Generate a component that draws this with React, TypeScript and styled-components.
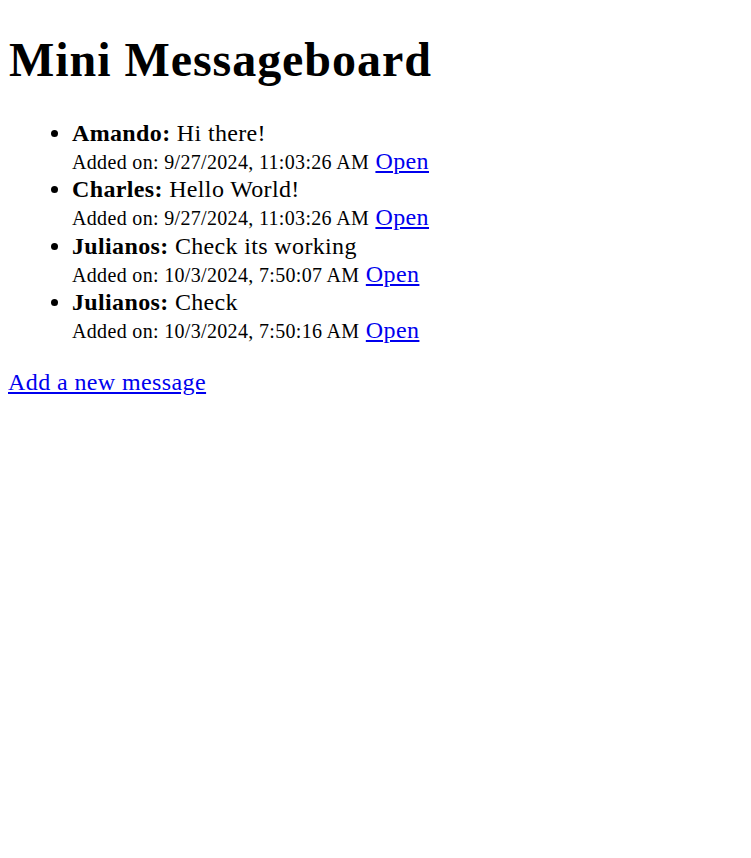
import React from "react";
import styled, { createGlobalStyle } from "styled-components";

const Global = createGlobalStyle`
  body {
    margin: 8px;
    font-family: "Liberation Serif", "Times New Roman", serif;
    font-size: 24px;
    color: #000;
    background: #fff;
  }
`;

const Title = styled.h1`
  font-size: 48px;
  font-weight: bold;
  letter-spacing: 0.95px;
  margin: 24px 0 32px 1px;
`;

const List = styled.ul`
  margin: 24px 0 25px;
  padding-left: 64px;
  list-style: disc;
  line-height: 28.15px;
`;

const Item = styled.li`
  font-size: 24px;
  letter-spacing: 0.35px;
`;

const Meta = styled.div`
  font-size: 24px;
`;

const Small = styled.span`
  font-size: 20px;
  line-height: 20px;
  letter-spacing: 0.33px;
`;

const Link = styled.a`
  color: #0000ee;
  text-decoration: underline;
  font-size: 24px;
  letter-spacing: 0.4px;
`;

const messages = [
  { user: "Amando", text: "Hi there!", added: "9/27/2024, 11:03:26 AM" },
  { user: "Charles", text: "Hello World!", added: "9/27/2024, 11:03:26 AM" },
  { user: "Julianos", text: "Check its working", added: "10/3/2024, 7:50:07 AM" },
  { user: "Julianos", text: "Check", added: "10/3/2024, 7:50:16 AM" },
];

export default function App() {
  return (
    <>
      <Global />
      <Title>Mini Messageboard</Title>
      <List>
        {messages.map((m, i) => (
          <Item key={i}>
            <strong>{m.user}:</strong> {m.text}
            <Meta>
              <Small>Added on: {m.added}</Small> <Link href="#">Open</Link>
            </Meta>
          </Item>
        ))}
      </List>
      <Link href="#">Add a new message</Link>
    </>
  );
}
